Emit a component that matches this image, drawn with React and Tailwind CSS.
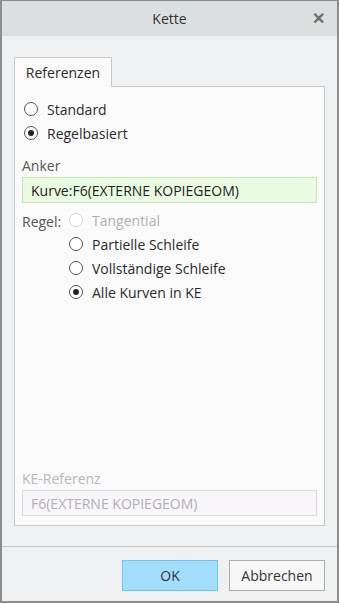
import React from 'react';

const Radio = ({ checked, disabled }) => (
  <span
    className={`flex h-[14px] w-[14px] shrink-0 items-center justify-center rounded-full border bg-white ${
      disabled ? 'border-[#d4d4d4]' : 'border-[#555]'
    }`}
  >
    {checked && <span className="h-[6px] w-[6px] rounded-full bg-[#222]" />}
  </span>
);

const Option = ({ label, checked, disabled }) => (
  <div className="flex h-[24px] items-center gap-[9px]">
    <Radio checked={checked} disabled={disabled} />
    <span className={disabled ? 'text-[#b0b0b0]' : 'text-[#2b2b2b]'}>{label}</span>
  </div>
);

export default function App() {
  return (
    <div
      className="flex h-[603px] w-[339px] flex-col border-x-2 border-t border-b-2 border-[#8c8c8c] bg-[#eff0f1] text-[14px]"
      style={{ fontFamily: '"Open Sans", "Noto Sans", sans-serif' }}
    >
      {/* title bar */}
      <div className="relative flex h-[35px] shrink-0 items-center justify-center bg-[#dcdfe0]">
        <span className="text-[14px] text-[#333]">Kette</span>
        <span className="absolute right-[12px] top-[9px] text-[16px] font-bold leading-none text-[#6e6e6e]">✕</span>
      </div>

      {/* content */}
      <div className="flex flex-1 flex-col px-[12px] pt-[21px]">
        <div className="flex">
          <div className="z-10 -mb-px flex h-[30px] w-[98px] items-center justify-center rounded-t-[2px] border border-b-0 border-[#c8c8c8] bg-[#fafafa] text-[#2b2b2b]">
            Referenzen
          </div>
        </div>
        <div className="flex h-[440px] flex-col border border-[#c8c8c8] bg-[#fafafa] px-[7px] pt-[10px]">
          <div className="pl-[2px]">
            <Option label="Standard" />
            <Option label="Regelbasiert" checked />
          </div>

          <div className="mt-[10px] text-[#555]">Anker</div>
          <div className="mt-[1px] flex h-[26px] items-center border border-[#c9e2ba] bg-[#e9fbe0] px-[8px] text-[#222]">
            Kurve:F6(EXTERNE KOPIEGEOM)
          </div>

          <div className="mt-[5px] flex">
            <span className="mt-[3px] w-[47px] text-[#555]">Regel:</span>
            <div>
              <Option label="Tangential" disabled />
              <Option label="Partielle Schleife" />
              <Option label="Vollständige Schleife" />
              <Option label="Alle Kurven in KE" checked />
            </div>
          </div>

          <div className="mt-auto text-[#b8b8b8]">KE-Referenz</div>
          <div className="mb-[9px] mt-[1px] flex h-[26px] items-center border border-[#dcdcdc] bg-[#f8f6fb] px-[8px] text-[#b0b0b0]">
            F6(EXTERNE KOPIEGEOM)
          </div>
        </div>
      </div>

      {/* footer */}
      <div className="mt-[20px] border-t border-[#c4c4c4]" />
      <div className="flex justify-end gap-[11px] px-[12px] pb-[10px] pt-[13px]">
        <button className="h-[31px] w-[96px] border border-[#6cc4f0] bg-[#a2defc] text-[#333]">OK</button>
        <button className="h-[31px] w-[96px] border border-[#adadad] bg-[#f7f7f7] text-[#333]">Abbrechen</button>
      </div>
    </div>
  );
}
